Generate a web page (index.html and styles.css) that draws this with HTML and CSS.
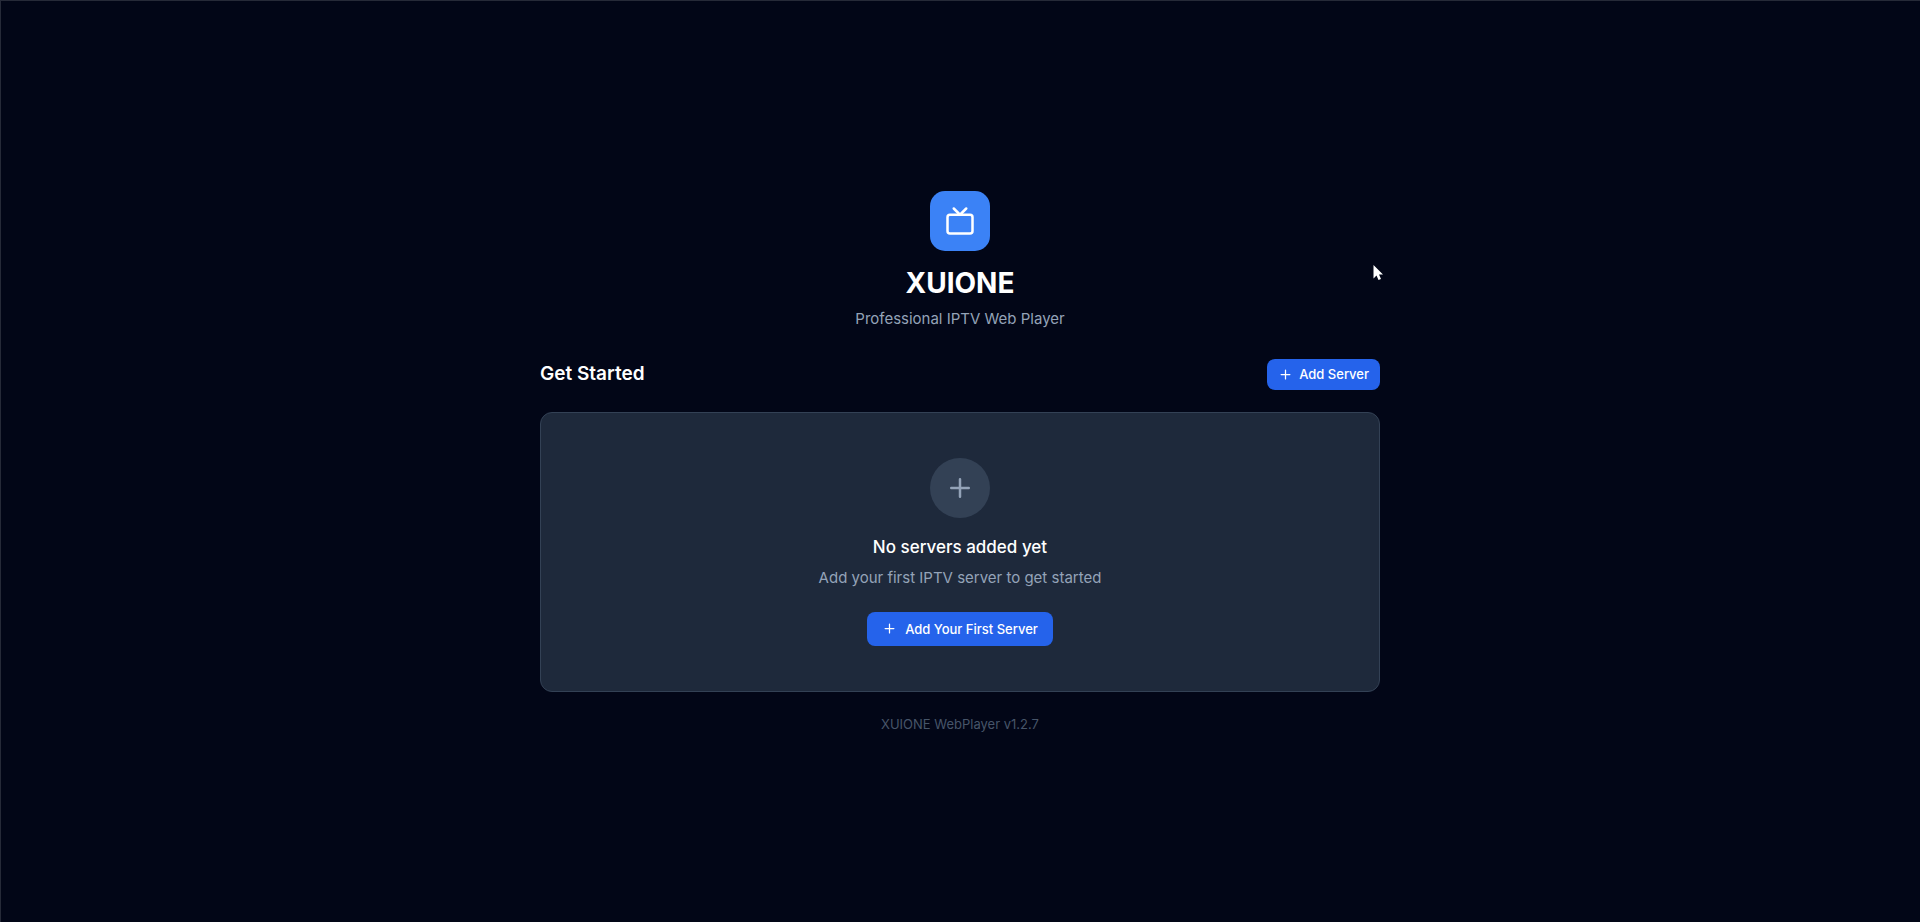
FILE: index.html
```html
<!DOCTYPE html>
<html lang="en">
<head>
<meta charset="utf-8">
<title>XUIONE</title>
<link rel="stylesheet" href="styles.css">
</head>
<body>
<main class="page">
  <header class="brand">
    <div class="logo">
      <svg width="30" height="30" viewBox="0 0 24 24" class="icon" aria-hidden="true"><rect width="20" height="15" x="2" y="7" rx="2"/><path d="m17 2-5 5-5-5"/></svg>
    </div>
    <h1 class="title">XUIONE</h1>
    <p class="tagline">Professional IPTV Web Player</p>
  </header>
  <div class="section-head">
    <h2 class="section-title">Get Started</h2>
    <button type="button" class="btn btn-small"><svg width="15" height="15" viewBox="0 0 24 24" class="icon" aria-hidden="true"><path d="M5 12h14M12 5v14"/></svg>Add Server</button>
  </div>
  <section class="empty">
    <div class="empty-icon"><svg width="30" height="30" viewBox="0 0 24 24" class="icon" aria-hidden="true"><path d="M5 12h14M12 5v14"/></svg></div>
    <h3 class="empty-title">No servers added yet</h3>
    <p class="empty-text">Add your first IPTV server to get started</p>
    <button type="button" class="btn"><svg width="15" height="15" viewBox="0 0 24 24" class="icon" aria-hidden="true"><path d="M5 12h14M12 5v14"/></svg>Add Your First Server</button>
  </section>
  <footer class="version">XUIONE WebPlayer v1.2.7</footer>
</main>
<svg class="cursor" width="12" height="17" viewBox="0 0 12 17" aria-hidden="true"><path d="M.5 0v13.5l3-3 2 4.5 2.500-1-2-4.500h4z"/></svg>
</body>
</html>
```
FILE: styles.css
```css
* { box-sizing: border-box; margin: 0; }
body {
  min-height: 100vh;
  display: flex;
  align-items: center;
  justify-content: center;
  box-shadow: inset 1px 1px #262a38;
  background: #020617;
  color: #fff;
  font-family: Inter, "Liberation Sans", sans-serif;
}
.page { width: 100%; max-width: 840px; padding-top: 2px; }
.icon { fill: none; stroke: currentColor; stroke-width: 2; stroke-linecap: round; stroke-linejoin: round; }
.brand { text-align: center; margin-bottom: 28px; }
.logo {
  width: 60px; height: 60px; margin: 0 auto 12px;
  display: flex; align-items: center; justify-content: center;
  border-radius: 15px; background: #3b82f6;
}
.title { font-size: 28px; line-height: 40px; font-weight: 700; }
.tagline { margin-top: 4px; font-size: 15px; line-height: 24px; color: #94a3b8; }
.section-head { display: flex; align-items: center; justify-content: space-between; margin-bottom: 22px; }
.section-title { font-size: 19px; line-height: 28px; font-weight: 600; }
.btn {
  display: inline-flex; align-items: center; justify-content: center; gap: 8px;
  height: 34px; padding: 0 15px; border: 0; border-radius: 8px;
  background: #2563eb; color: #fff; font: 500 13px/20px Inter, "Liberation Sans", sans-serif;
}
.btn-small { height: 31px; padding: 0 11px; gap: 6px; }
.empty {
  display: flex; flex-direction: column; align-items: center;
  padding: 45px 24px; border: 1px solid #334155; border-radius: 12px; background: #1e293b;
}
.empty-icon {
  width: 60px; height: 60px; margin-bottom: 16px;
  display: flex; align-items: center; justify-content: center;
  border-radius: 50%; background: #334155; color: #94a3b8;
}
.empty-title { font-size: 17px; line-height: 26px; font-weight: 500; }
.empty-text { margin: 6px 0 22px; font-size: 15px; line-height: 24px; color: #94a3b8; }
.version { margin-top: 22px; text-align: center; font-size: 13px; line-height: 20px; color: #475569; }
.cursor { position: absolute; left: 1373px; top: 265px; fill: #fff; }
```
